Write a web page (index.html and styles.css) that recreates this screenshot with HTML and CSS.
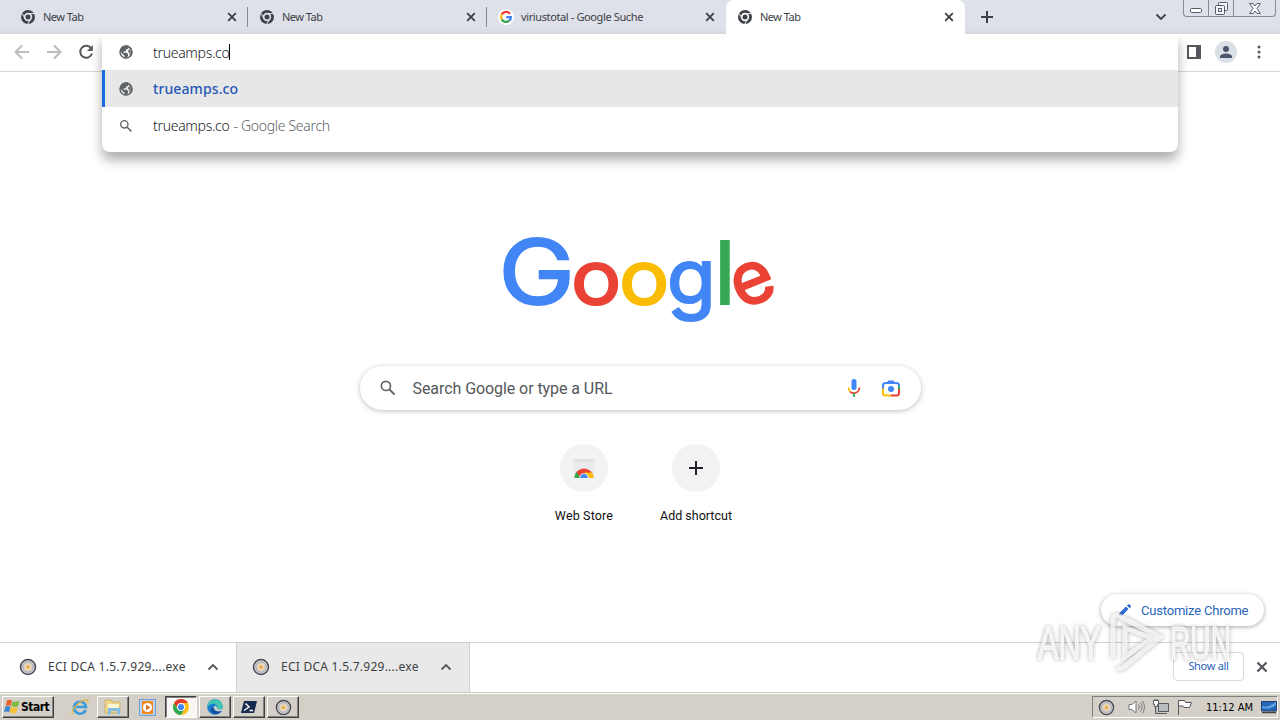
FILE: index.html
```html
<!DOCTYPE html>
<html lang="en">
<head>
<meta charset="UTF-8">
<title>New Tab</title>
<meta name="viewport" content="width=device-width, initial-scale=1.0">
<link rel="stylesheet" href="styles.css">
</head>
<body>
  <!-- shared icons -->
  <svg class="sprite" width="0" height="0">
    <symbol id="chrome-mono" viewBox="0 0 14 14">
      <circle cx="7" cy="7" r="5.6" fill="none" stroke="currentColor" stroke-width="2.8"/>
      <circle cx="7" cy="7" r="2.5" fill="currentColor"/>
      <path d="M7 3.600H13.300M4.100 8.700L1 3.300M9.900 8.700L6.800 14" stroke="#e8eaee" stroke-width="1" fill="none"/>
    </symbol>
    <symbol id="close" viewBox="0 0 10 10">
      <path d="M1.2 1.2L8.8 8.8M8.8 1.2L1.2 8.8" stroke="currentColor" stroke-width="1.8"/>
    </symbol>
    <symbol id="globe" viewBox="0 0 24 24">
      <circle cx="12" cy="12" r="9" fill="none" stroke="currentColor" stroke-width="2.200"/>
      <path fill="currentColor" d="M3 9l4-6 8-1 1 3-1.500 3H12v3H9l-1 2h5l2 2v3l-3 4-2-1v-3l-3-3-4-4z"/>
      <path fill="currentColor" d="M16 3l4 4 2 6-3 6-2-2v-3l-2-2v-3l3-1-2-2z" opacity=".8"/>
    </symbol>
    <symbol id="search" viewBox="0 0 24 24">
      <circle cx="9.500" cy="9.500" r="5.500" fill="none" stroke="currentColor" stroke-width="2"/>
      <path d="M13.800 13.800L20 20" stroke="currentColor" stroke-width="2.400"/>
    </symbol>
    <symbol id="disc" viewBox="0 0 18 18">
      <circle cx="9" cy="9" r="7.500" fill="#d3d0d3" stroke="#484b55" stroke-width="1.500"/>
      <circle cx="9" cy="9" r="5.200" fill="none" stroke="#aaa9b2"/>
      <circle cx="9" cy="9" r="3.800" fill="#ead5ae"/>
      <circle cx="9" cy="9" r="1.600" fill="#e9a33b"/>
    </symbol>
    <symbol id="caret-up" viewBox="0 0 12 8">
      <path d="M1.500 6.500L6 2l4.500 4.500" fill="none" stroke="currentColor" stroke-width="1.800"/>
    </symbol>
  </svg>

  <div class="tab-strip">
    <div class="tab">
      <svg class="favicon"><use href="#chrome-mono"/></svg>
      <span class="tab-title new-tab">New Tab</span>
      <svg class="tab-close"><use href="#close"/></svg>
    </div>
    <div class="tab">
      <svg class="favicon"><use href="#chrome-mono"/></svg>
      <span class="tab-title new-tab">New Tab</span>
      <svg class="tab-close"><use href="#close"/></svg>
    </div>
    <div class="tab last">
      <svg class="favicon google" viewBox="0 0 16 16">
        <circle cx="8" cy="8" r="8" fill="#fff"/>
        <g fill="none" stroke-width="2.300">
          <path d="M11.900 4.700A4.900 4.900 0 0 0 3.700 5.600" stroke="#ea4335"/>
          <path d="M3.700 5.600A4.900 4.900 0 0 0 3.700 10.400" stroke="#fbbc05"/>
          <path d="M3.700 10.400A4.900 4.900 0 0 0 11.200 11.700" stroke="#34a853"/>
          <path d="M11.200 11.700A4.900 4.900 0 0 0 12.900 8.100H8.200" stroke="#4285f4"/>
        </g>
      </svg>
      <span class="tab-title suche">viriustotal - Google Suche</span>
      <svg class="tab-close"><use href="#close"/></svg>
    </div>
    <div class="tab active">
      <svg class="favicon"><use href="#chrome-mono"/></svg>
      <span class="tab-title new-tab">New Tab</span>
      <svg class="tab-close"><use href="#close"/></svg>
    </div>
    <svg class="add-tab" viewBox="0 0 12 12"><path d="M6 0v12M0 6h12" stroke="#3c4043" stroke-width="2"/></svg>
    <svg class="tab-search" viewBox="0 0 12 8"><path d="M1.500 1.500L6 6l4.500-4.500" fill="none" stroke="#3c4043" stroke-width="1.800"/></svg>
    <div class="window-buttons">
      <span><svg width="12" height="5" viewBox="0 0 12 5"><rect x=".5" y=".5" width="11" height="4" rx="1" fill="#fff" stroke="#555a65"/></svg></span>
      <span><svg width="13" height="13" viewBox="0 0 13 13"><g fill="#f4f5f8" stroke="#555a65"><rect x="3.500" y=".5" width="9" height="8" rx="1"/><rect x=".5" y="3.500" width="9" height="9" rx="1"/><rect x="3.500" y="6.500" width="3" height="3"/></g></svg></span>
      <span class="wide"><svg width="12" height="11" viewBox="0 0 12 11"><path d="M.7.500H4L6 3 8 .5h3.300L8 5.500l3.300 5H8L6 8l-2 2.500H.7L4 5.500z" fill="#fff" stroke="#555a65"/></svg></span>
    </div>
  </div>

  <div class="toolbar">
    <svg class="nav-icon off" viewBox="0 0 16 16"><path d="M15 8H2M8 1.500L1.500 8 8 14.500"/></svg>
    <svg class="nav-icon off" viewBox="0 0 16 16"><path d="M1 8h13M8 1.500L14.500 8 8 14.500"/></svg>
    <svg class="nav-icon" viewBox="0 0 16 16"><path d="M13.300 4.500A6 6 0 1 0 14 9.500"/><path d="M14.800 1v6H9z" class="solid"/></svg>
    <div class="toolbar-right">
      <svg width="14" height="14" viewBox="0 0 14 14"><path d="M1 1h12v12H1z" fill="none" stroke="#54575b" stroke-width="2"/><path d="M9 0h5v14H9z" fill="#54575b"/></svg>
      <svg width="22" height="22" viewBox="0 0 22 22"><circle cx="11" cy="11" r="11" fill="#dbdfe6"/><circle cx="11" cy="8" r="3" fill="#4a546c"/><path d="M5 17v-1.500c0-2 4-3 6-3s6 1 6 3V17z" fill="#4a546c"/></svg>
      <svg width="4" height="14" viewBox="0 0 4 14" fill="#54575b"><circle cx="2" cy="2" r="1.500"/><circle cx="2" cy="7" r="1.500"/><circle cx="2" cy="12" r="1.500"/></svg>
    </div>
  </div>

  <!-- address bar with its suggestions, over the page -->
  <div class="omnibox">
    <div class="omni-row input">
      <svg class="omni-icon"><use href="#globe"/></svg>
      <span class="url">trueamps.co</span><i class="cursor"></i>
    </div>
    <div class="omni-row selected">
      <svg class="omni-icon"><use href="#globe"/></svg>
      <span class="match">trueamps.co</span>
    </div>
    <div class="omni-row">
      <svg class="omni-icon"><use href="#search"/></svg>
      <span class="url">trueamps.co</span><span class="hint">- Google Search</span>
    </div>
  </div>

  <main>
    <svg class="logo" width="280" height="100" viewBox="500 230 280 100">
      <text transform="translate(498.500 303.500) scale(1.150 1)" font-size="89" fill="#4285f4" stroke="#4285f4">G</text>
      <text transform="translate(571 303.500) scale(1.120 1)" font-size="75" fill="#ea4335" stroke="#ea4335">o</text>
      <text transform="translate(619 303.500) scale(1.120 1)" font-size="75" fill="#fbbc05" stroke="#fbbc05">o</text>
      <text transform="translate(667 303.500) scale(1.090 1.050)" font-size="73" fill="#4285f4" stroke="#4285f4">g</text>
      <text transform="translate(714.500 303.500)" font-size="86" fill="#34a853" stroke="#34a853">l</text>
      <text transform="translate(753.500 283) rotate(-22) translate(-22 20)" font-size="73" fill="#ea4335" stroke="#ea4335">e</text>
    </svg>

    <div class="search-box">
      <svg class="glass"><use href="#search"/></svg>
      <span>Search Google or type a URL</span>
      <svg class="mic" width="14" height="20" viewBox="0 0 14 20">
        <rect x="4.500" y="1" width="5" height="11" rx="2.500" fill="#4285f4"/>
        <path d="M1.500 9.500c0 2 .8 3.500 2 4.300" fill="none" stroke="#fbbc05" stroke-width="1.800"/>
        <path d="M3.200 13.700c2.400 2 5.500 1.500 7 .4 1.300-1 2.300-2.400 2.300-4.600" fill="none" stroke="#ea4335" stroke-width="1.800"/>
        <path d="M7 15v4" stroke="#34a853" stroke-width="1.800"/>
      </svg>
      <svg class="lens" width="18" height="18" viewBox="0 0 18 18">
        <g fill="none" stroke-width="2">
          <path d="M1 10V6.500C1 4.500 2 4 3.500 4h11C16 4 17 4.500 17 6.500V9" stroke="#4285f4"/>
          <path d="M17 8.500V14c0 1.500-1 2.500-2.500 2.500H9" stroke="#ea4335"/>
          <path d="M1 9.500V14c0 1.500 1 2.500 2.500 2.500H9" stroke="#fbbc05"/>
          <path d="M17 7v3" stroke="#34a853"/>
        </g>
        <path d="M5 3.500L6.500 1.500h5L13 3.500z" fill="#4285f4"/>
        <circle cx="9" cy="10" r="3" fill="#4285f4"/>
      </svg>
    </div>

    <div class="shortcuts">
      <div class="shortcut">
        <div class="shortcut-icon store">
          <svg width="24" height="24" viewBox="0 0 24 24">
            <path d="M1 3h22l-1.500 19h-19z" fill="#e8eaeb"/>
            <path d="M1 3h22l-.3 3H1.300z" fill="#dfe1e2"/>
            <path d="M2.500 22a9.500 9.500 0 0 1 19 0z" fill="#ea4335"/>
            <path d="M2.500 22A9.500 9.500 0 0 1 4.500 16l4.500 6z" fill="#34a853"/>
            <path d="M21.500 22a9.500 9.500 0 0 0-1.500-5.500h-7V22z" fill="#fbbc05"/>
            <path d="M7.300 22a4.700 4.700 0 0 1 9.400 0z" fill="#fff"/>
            <path d="M8.300 22a3.700 4 0 0 1 7.400 0z" fill="#4285f4"/>
          </svg>
        </div>
        <span class="store-label">Web Store</span>
      </div>
      <div class="shortcut">
        <div class="shortcut-icon">
          <svg width="14" height="14" viewBox="0 0 14 14"><path d="M7 0v14M0 7h14" stroke="#202124" stroke-width="2"/></svg>
        </div>
        <span class="add-label">Add shortcut</span>
      </div>
    </div>

    <div class="customize">
      <svg width="12" height="12" viewBox="0 0 12 12"><path d="M0 12V9.500L7 2.500 9.500 5l-7 7zM8 1.500L9.300.2h1L12 2v1L10.500 4z" fill="#2f6bd4"/></svg>
      <span>Customize Chrome</span>
    </div>
  </main>

  <div class="downloads">
    <div class="download">
      <svg class="disc"><use href="#disc"/></svg>
      <span>ECI DCA 1.5.7.929....exe</span>
      <svg class="caret"><use href="#caret-up"/></svg>
    </div>
    <div class="download hover">
      <svg class="disc"><use href="#disc"/></svg>
      <span>ECI DCA 1.5.7.929....exe</span>
      <svg class="caret"><use href="#caret-up"/></svg>
    </div>
    <div class="show-all"><span>Show all</span></div>
    <svg class="bar-close"><use href="#close"/></svg>
  </div>

  <div class="taskbar">
    <div class="start">
      <svg width="16" height="16" viewBox="0 0 16 16">
        <path d="M3 1.500c2-1 3.500-.8 5 .2L6.700 7C5 6 3.500 6 1.700 6.800z" fill="#e9622c"/>
        <path d="M8.700 2.200c2 1 4 .8 6.800-.4L14 7.200c-2.500 1-4.500.8-6.600-.1z" fill="#7db83c"/>
        <path d="M1.400 7.700c2-.9 3.500-.8 5 .2L5.100 13.200C3.500 12.200 2 12.200 0 13z" fill="#3b86d2"/>
        <path d="M7.200 8c2.100 1 4.100 1 6.500.2l-1.500 5.500c-2.400.9-4.500.7-6.600-.1z" fill="#f6c12f"/>
      </svg>
      <b>Start</b>
    </div>
    <div class="task flat ie">
      <svg width="18" height="18" viewBox="0 0 18 18"><path d="M14.700 11.800A6 6 0 1 1 15 9H5" fill="none" stroke="#3d9bdc" stroke-width="2.600"/><path d="M1.500 16C-1 12 10 1 16.500 2c1 .3.700 2-.2 3" fill="none" stroke="#e5b43c" stroke-width="1.300"/></svg>
    </div>
    <div class="task explorer">
      <svg width="18" height="16" viewBox="0 0 18 16"><path d="M1 1h6l1 2h8v11H1z" fill="#eed58a" stroke="#c5a550" stroke-width=".7"/><path d="M4 5h11v5H4z" fill="#fbf5d2"/><path d="M4 15V9h12v6h-3v-3H7v3z" fill="#83bde5"/></svg>
    </div>
    <div class="task flat wmp">
      <svg width="17" height="17" viewBox="0 0 17 17"><rect x=".5" y=".5" width="16" height="16" fill="#b9d3ec" stroke="#6f9ed0"/><path d="M3 2h11v13H3z" fill="#f18a1d"/><circle cx="8.500" cy="8.500" r="4.500" fill="#fff"/><path d="M7 5.700l4.500 2.800L7 11.300z" fill="#e2701c"/></svg>
    </div>
    <div class="task pressed">
      <svg width="16" height="16" viewBox="0 0 16 16"><circle cx="8" cy="8" r="8" fill="#fbc116"/><path d="M1.100 4A8 8 0 0 1 14.900 4H8L5 10z" fill="#e33b2e"/><path d="M1.100 4A8 8 0 0 0 8 16l3.500-6H4.600z" fill="#2da94f"/><circle cx="8" cy="8" r="4" fill="#fff"/><circle cx="8" cy="8" r="3.100" fill="#4285f4"/></svg>
    </div>
    <div class="task">
      <svg width="16" height="16" viewBox="0 0 16 16"><circle cx="8" cy="8" r="7.800" fill="#1b7fcf"/><path d="M.5 7C1.500-1.500 14.500-2 15.800 7c0 3-4 4-6 2.600 1.500-3-2-5.600-5-4.600C2.500 5.600 1 7 .5 9z" fill="#3fc5b0"/><path d="M6.500 8c-.5 4 4 5.500 8 4-3 4.500-9 3.500-10.500.500C3 10.500 4.500 8.500 6.500 8z" fill="#134f9d"/><path d="M6.700 8c.8-2 3.800-1 3.200 1.400 1.700 1.600 4.600 1.100 5.800-.6l-.9 3C11 13.200 6.800 11.500 6.700 8z" fill="#d4d0c8"/></svg>
    </div>
    <div class="task">
      <svg width="16" height="12" viewBox="0 0 16 12"><path d="M3 0h13l-3 12H0z" fill="#16294e"/><path d="M4.500 2.500L8 6l-5 3.500M8.500 9.500h3.500" stroke="#fff" stroke-width="1.500" fill="none"/></svg>
    </div>
    <div class="task">
      <svg width="17" height="17"><use href="#disc"/></svg>
    </div>
    <div class="tray">
      <svg width="17" height="17"><use href="#disc"/></svg>
      <svg class="speaker" width="17" height="16" viewBox="0 0 17 16" fill="none" stroke="#77777a"><path d="M1 5.500h3L8 2v12l-4-3.500H1z" fill="#fff"/><path d="M10.500 5.500c1 1.500 1 3.500 0 5M12.500 3.500c2 2.500 2 6.500 0 9M14.500 2c2.500 3 2.500 9 0 12"/></svg>
      <svg class="network" width="16" height="16" viewBox="0 0 16 16" fill="#fff" stroke="#55585c"><path d="M5.500 4.500h10v8h-10zM8 14.500h6M2.500 7v7.500H8" fill="#b8bcc0"/><path d="M.5 1.500h5v4h-1v2h-3v-2h-1zM2 0v2M4 0v2"/></svg>
      <svg class="flag" width="16" height="16" viewBox="0 0 16 16" fill="#fff" stroke="#55585c"><path d="M1.500 1v15"/><path d="M1.500 1.500h6l1 2h6l-2 5H7l-1-1.500H1.500z"/></svg>
      <time>11:12 AM</time>
      <svg class="desktop" width="16" height="13" viewBox="0 0 16 13"><path d="M.5.500h15v9.500H.5z" fill="#2867b8" stroke="#23416f"/><path d="M1 5c5 2 9-1 14-4v3C10 8 5 8 1 7z" fill="#5ba4e2"/><path d="M1 11.500h14" stroke="#444" stroke-width="1.500"/></svg>
    </div>
  </div>

  <svg class="watermark" width="210" height="76" viewBox="1030 602 210 76">
    <text x="1038" y="659" textLength="63" lengthAdjust="spacingAndGlyphs">ANY</text>
    <g class="play">
      <path d="M1113 658v-38q1-6 6-4l41 21-36 30q-4 3-7 0"/>
      <path d="M1125 657v-29l27 10z"/>
    </g>
    <text x="1170" y="659" textLength="61" lengthAdjust="spacingAndGlyphs">RUN</text>
  </svg>
</body>
</html>
```

FILE: styles.css
```css
* {
  box-sizing: border-box;
}
body {
  margin: 0;
  width: 1280px;
  height: 720px;
  display: flex;
  flex-direction: column;
  position: relative;
  overflow: hidden;
  background: #fff;
  font-family: "Noto Sans", "Open Sans", sans-serif;
  color: #3c4043;
}
svg {
  display: block;
  flex: none;
}
span, time, b {
  white-space: nowrap;
}
.sprite {
  position: absolute;
}

/* tabs */
.tab-strip {
  height: 34px;
  flex: none;
  display: flex;
  align-items: center;
  padding-left: 9px;
  background: linear-gradient(#dee1e9 28px, #d6d8df);
}
.tab {
  width: 239px;
  height: 34px;
  padding: 0 11px 0 12px;
  display: flex;
  align-items: center;
  position: relative;
  font-size: 11px;
}
.tab::after {
  content: "";
  position: absolute;
  right: 0;
  top: 7px;
  width: 1px;
  height: 20px;
  background: #858991;
}
.tab.active::after, .tab.last::after {
  display: none;
}
.tab.active {
  background: #fff;
  border-radius: 8px 8px 0 0;
}
.favicon {
  width: 14px;
  height: 14px;
  margin-right: 8px;
  color: #3f4248;
}
.favicon.google {
  width: 16px;
  height: 16px;
  margin: 0 7px 0 -1px;
}
.tab-title {
  padding-bottom: 1px;
}
.tab-title.new-tab {
  letter-spacing: -0.5px;
}
.tab-title.suche {
  letter-spacing: -0.38px;
}
.tab-close {
  width: 10px;
  height: 10px;
  margin-left: auto;
}
.add-tab {
  width: 12px;
  height: 12px;
  margin-left: 16px;
}
.tab-search {
  width: 12px;
  height: 8px;
  margin-left: auto;
  margin-right: 16px;
}
.window-buttons {
  display: flex;
  align-self: flex-start;
  height: 17px;
  margin-right: 4px;
  border: 1px solid #858a96;
  border-top: 0;
  border-radius: 0 0 4px 4px;
}
.window-buttons span {
  width: 25px;
  display: flex;
  justify-content: center;
  align-items: center;
  border-right: 1px solid #858a96;
}
.window-buttons span:first-child {
  padding-top: 5px;
}
.window-buttons .wide {
  width: 41px;
  border: 0;
}

/* toolbar */
.toolbar {
  height: 38px;
  flex: none;
  display: flex;
  align-items: center;
  gap: 16px;
  padding: 0 19px 2px 14px;
  border-bottom: 1px solid #d5d6d8;
}
.nav-icon {
  width: 16px;
  height: 16px;
  fill: none;
  stroke: #54575b;
  stroke-width: 2;
}
.nav-icon.off {
  stroke: #bbbcbe;
}
.nav-icon .solid {
  fill: #54575b;
  stroke: none;
}
.toolbar-right {
  margin-left: auto;
  display: flex;
  align-items: center;
  gap: 14px;
}
.toolbar-right svg:last-child {
  margin-left: 6px;
}

/* address bar */
.omnibox {
  position: absolute;
  z-index: 2;
  left: 102px;
  top: 34px;
  width: 1076px;
  height: 118px;
  background: #fff;
  border-radius: 0 0 8px 8px;
  box-shadow: 0 8px 12px rgba(0,0,0,0.32);
  clip-path: inset(0 -20px -30px -20px);
}
.omni-row {
  height: 37px;
  display: flex;
  align-items: center;
  padding-left: 16px;
  font-size: 14px;
}
.omni-row.input {
  height: 36px;
}
.omni-row.selected {
  background: #e7e7e7;
  border-left: 3px solid #1a6ae0;
  padding-left: 13px;
}
.omni-icon {
  width: 16px;
  height: 16px;
  margin-right: 19px;
  color: #606367;
}
.url {
  color: #202124;
  font-weight: 300;
}
.url, .hint {
  letter-spacing: -0.3px;
}
.cursor {
  width: 1px;
  height: 16px;
  background: #000;
}
.match {
  color: #2457b5;
  font-weight: 500;
  letter-spacing: 0.1px;
}
.hint {
  margin-left: 4px;
  color: #606367;
  font-weight: 300;
}

/* new tab page */
main {
  height: 570px;
  flex: none;
  display: flex;
  flex-direction: column;
  align-items: center;
  position: relative;
  font-family: Roboto, sans-serif;
}
.logo {
  margin-top: 158px;
  overflow: visible;
}
.logo text {
  font-family: Inter, sans-serif;
  stroke-width: 2;
}
.search-box {
  width: 561px;
  height: 44px;
  margin-top: 36px;
  padding: 0 21px 0 18px;
  display: flex;
  align-items: center;
  border-radius: 22px;
  box-shadow: 0 1px 5px rgba(32,33,36,0.3);
  font-size: 16px;
  letter-spacing: -0.07px;
  color: #54575b;
}
.glass {
  width: 20px;
  height: 20px;
  margin-right: 15px;
  color: #606367;
}
.mic {
  margin-left: auto;
  margin-right: 21px;
}
.shortcuts {
  display: flex;
  margin-top: 34px;
}
.shortcut {
  width: 112px;
  display: flex;
  flex-direction: column;
  align-items: center;
  font-size: 12.5px;
  color: #111;
}
.store-label {
  letter-spacing: 0.15px;
}
.shortcut-icon {
  width: 48px;
  height: 48px;
  margin-bottom: 16px;
  border-radius: 50%;
  background: #f1f3f4;
  display: flex;
  justify-content: center;
  align-items: center;
}
.customize {
  position: absolute;
  right: 16px;
  bottom: 16px;
  width: 163px;
  height: 32px;
  display: flex;
  align-items: center;
  padding-left: 18px;
  gap: 10px;
  border-radius: 16px;
  background: #fff;
  box-shadow: 0 1px 4px rgba(0,0,0,0.35);
  font-size: 13px;
  letter-spacing: -0.2px;
  color: #2a63b8;
}

/* download shelf */
.downloads {
  height: 50px;
  flex: none;
  display: flex;
  align-items: center;
  border-top: 1px solid #d0d1d3;
  background: #fff;
}
.download {
  width: 237px;
  height: 49px;
  display: flex;
  align-items: center;
  padding: 0 0 2px 19px;
  border-right: 1px solid #cfd0d2;
  font-size: 12px;
  letter-spacing: 0.25px;
}
.download.hover {
  width: 233px;
  padding-left: 15px;
  background: #e9e9e9;
}
.disc {
  width: 18px;
  height: 18px;
  margin-right: 11px;
}
.caret {
  width: 12px;
  height: 8px;
  margin-left: auto;
  margin-right: 17px;
  color: #54575b;
}
.show-all {
  width: 71px;
  height: 29px;
  margin: 0 0 2px auto;
  display: flex;
  align-items: center;
  justify-content: center;
  padding-bottom: 2px;
  border: 1px solid #d8dadd;
  border-radius: 4px;
  color: #2a63b8;
  font-size: 11px;
  letter-spacing: -0.3px;
}
.bar-close {
  width: 12px;
  height: 12px;
  margin: 0 12px 2px;
  color: #54575b;
}

/* taskbar */
.taskbar {
  height: 28px;
  flex: none;
  display: flex;
  align-items: center;
  padding: 1px 2px 0;
  background: #d4d0c8;
  border-top: 1px solid #c9c6c0;
  box-shadow: inset 0 1px #fff;
  font-family: "DejaVu Sans Condensed", "DejaVu Sans", sans-serif;
  font-size: 11px;
  color: #000;
}
.start {
  width: 52px;
  height: 22px;
  display: flex;
  align-items: center;
  padding-left: 1px;
  gap: 1px;
  border: 1px solid;
  border-color: #fff #404040 #404040 #fff;
  box-shadow: inset -1px -1px #808080;
}
.start b {
  font-size: 12px;
  letter-spacing: -0.5px;
}
.task {
  width: 32px;
  height: 22px;
  margin-right: 2px;
  display: flex;
  align-items: center;
  justify-content: center;
  border: 1px solid;
  border-color: #fff #404040 #404040 #fff;
  box-shadow: inset -1px -1px #808080;
}
.task.flat {
  border: 0;
  box-shadow: none;
}
.task.ie {
  margin-left: 10px;
  margin-right: 1px;
}
.task.pressed {
  background: #f8f7f5;
  border-color: #404040 #fff #fff #404040;
  box-shadow: inset 1px 1px #808080;
}
.tray {
  margin-left: auto;
  width: 186px;
  height: 22px;
  display: flex;
  align-items: center;
  padding-left: 5px;
  border: 1px solid;
  border-color: #808080 #fff #fff #808080;
}
.speaker {
  margin-left: 13px;
}
.network, .flag {
  margin-left: 8px;
}
.tray time {
  margin-left: 13px;
}
.desktop {
  margin-left: auto;
}

.watermark {
  position: absolute;
  z-index: 3;
  left: 1030px;
  top: 602px;
  fill: rgba(255,255,255,0.75);
  stroke: rgba(255,255,255,0.75);
  stroke-width: 1.5;
  filter: drop-shadow(0 0 2px rgba(0,0,0,0.4));
}
.watermark text {
  font-family: "Liberation Sans", sans-serif;
  font-size: 46px;
}
.watermark .play {
  fill: none;
  stroke-width: 5;
}
```
